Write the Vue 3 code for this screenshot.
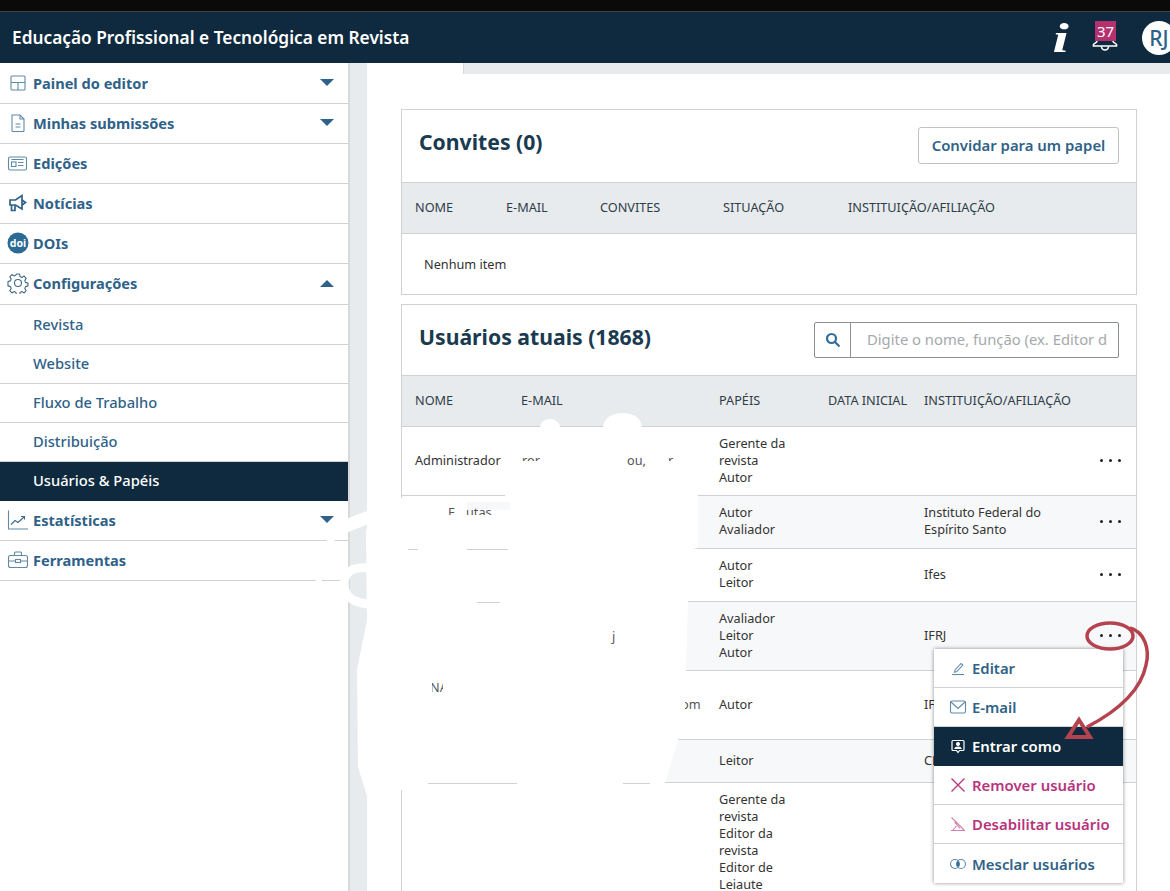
<script setup>
const nav = [
  { label: 'Painel do editor', icon: 'panel', caret: 'down' },
  { label: 'Minhas submissões', icon: 'doc', caret: 'down' },
  { label: 'Edições', icon: 'issue' },
  { label: 'Notícias', icon: 'news' },
  { label: 'DOIs', icon: 'doi' },
  { label: 'Configurações', icon: 'gear', caret: 'up' },
  { label: 'Revista', sub: true },
  { label: 'Website', sub: true },
  { label: 'Fluxo de Trabalho', sub: true },
  { label: 'Distribuição', sub: true },
  { label: 'Usuários & Papéis', sub: true, active: true },
  { label: 'Estatísticas', icon: 'stats', caret: 'down' },
  { label: 'Ferramentas', icon: 'tools' },
]
const invites = ['NOME', 'E-MAIL', 'CONVITES', 'SITUAÇÃO', 'INSTITUIÇÃO/AFILIAÇÃO']
const rows = [
  { name: 'Administrador', roles: ['Gerente da', 'revista', 'Autor'], inst: [], h: 69, dots: true },
  { name: '', roles: ['Autor', 'Avaliador'], inst: ['Instituto Federal do', 'Espírito Santo'], h: 53, dots: true },
  { name: '', roles: ['Autor', 'Leitor'], inst: ['Ifes'], h: 53, dots: true },
  { name: '', roles: ['Avaliador', 'Leitor', 'Autor'], inst: ['IFRJ'], h: 69, dots: true },
  { name: '', roles: ['Autor'], inst: ['IFF'], h: 69 },
  { name: '', roles: ['Leitor'], inst: ['CEFET'], h: 43 },
  { name: '', roles: ['Gerente da', 'revista', 'Editor da', 'revista', 'Editor de', 'Leiaute'], inst: [], h: 120 },
]
const menu = [
  { label: 'Editar', icon: 'edit' },
  { label: 'E-mail', icon: 'mail' },
  { label: 'Entrar como', icon: 'login', active: true },
  { label: 'Remover usuário', icon: 'x', danger: true },
  { label: 'Desabilitar usuário', icon: 'disable', danger: true },
  { label: 'Mesclar usuários', icon: 'merge' },
]
</script>

<template>
  <div class="page">
    <div class="blackbar"></div>
    <header class="top">
      <div class="brand">Educação Profissional e Tecnológica em Revista</div>
      <div class="tools">
        <span class="info">i</span>
        <span class="bell">
          <span class="badge">37</span>
          <svg class="bellsvg" width="26" height="12" viewBox="0 0 26 12" fill="none" stroke="#fff" stroke-width="1.600">
            <path d="M5 0c0 2-3 2-3.500 3.500V5h23V3.500C24 2 21 2 21 0" />
            <path d="M9.500 5.500a3.500 3.500 0 0 0 7 0" />
          </svg>
        </span>
        <span class="avatar">RJ</span>
      </div>
    </header>
    <div class="body">
      <nav class="side">
        <a v-for="n in nav" :key="n.label" class="item" :class="{ sub: n.sub, active: n.active }">
          <svg v-if="n.icon" class="ic" viewBox="0 0 22 22" width="22" height="22" fill="none" stroke="#5f8aa6" stroke-width="1.100">
            <template v-if="n.icon === 'panel'">
              <rect x="4" y="4" width="14" height="14" rx="1" />
              <path d="M4 10.500h14M11 10.500V18" />
            </template>
            <template v-else-if="n.icon === 'doc'">
              <path d="M5 3h8l4 4v11.500a1 1 0 0 1-1 1H6a1 1 0 0 1-1-1z" />
              <path d="M13 3v4h4M8.500 12h5M8.500 15h5" />
            </template>
            <template v-else-if="n.icon === 'issue'">
              <rect x="1.500" y="5" width="18" height="13" rx="1.500" />
              <rect x="4.500" y="10" width="4.500" height="4.500" />
              <path d="M4.500 7.500h12M11 10.500h5.500M11 13.500h5.500" />
            </template>
            <template v-else-if="n.icon === 'news'">
              <g stroke="#2f6288" stroke-width="1.700">
                <path d="M3 8h5.500L15 3.500v13.500L8.500 13H3z" />
                <path d="M4.500 13v5.500h3.500V13M15 8l3.500 2.500L15 13" />
              </g>
            </template>
            <template v-else-if="n.icon === 'doi'">
              <circle cx="11" cy="11" r="10.500" fill="#2a6a94" stroke="none" />
              <text x="11" y="14.500" text-anchor="middle" class="doit">doi</text>
            </template>
            <template v-else-if="n.icon === 'gear'">
              <circle cx="11" cy="11" r="3.500" stroke="#3f6a88" />
              <path stroke="#3f6a88" stroke-linejoin="round" d="M9.500 2h3l.6 2.600 1.700.8 2.400-1.300 2 2.200-1.400 2.300.7 1.800 2.500.7v2.800l-2.500.7-.7 1.800 1.400 2.300-2 2.200-2.400-1.300-1.700.8-.6 2.600h-3l-.6-2.600-1.700-.8-2.400 1.300-2-2.200 1.400-2.300-.7-1.800-2.500-.7V9.600l2.500-.7.7-1.800-1.400-2.300 2-2.200 2.400 1.300 1.700-.8z" />
            </template>
            <template v-else-if="n.icon === 'stats'">
              <path d="M1.500 1.500v18.500h19.500" />
              <path d="M4 15.500l4-4 3 2 6-5.500M14 7.500h3.500v3" stroke="#3f6a88" />
            </template>
            <template v-else-if="n.icon === 'tools'">
              <rect x="1.500" y="6.500" width="19" height="12" rx="2" />
              <path d="M7.500 6.500V4a1 1 0 0 1 1-1h5a1 1 0 0 1 1 1v2.500M1.500 12h7M13.500 12h7" />
              <rect x="8.500" y="10.500" width="5" height="3" />
            </template>
          </svg>
          <span class="lbl">{{ n.label }}</span>
          <span v-if="n.caret" class="caret" :class="n.caret"></span>
        </a>
      </nav>
      <div class="gutter"></div>
      <main class="main">
        <div class="tabline"><div class="tabgap"></div><div class="tabrest"></div></div>

        <section class="box first">
          <div class="boxhead">
            <h2>Convites (0)</h2>
            <button class="btn">Convidar para um papel</button>
          </div>
          <div class="thead inv">
            <span v-for="h in invites" :key="h">{{ h }}</span>
          </div>
          <div class="empty">Nenhum item</div>
        </section>

        <section class="box second">
          <div class="boxhead two">
            <h2>Usuários atuais (1868)</h2>
            <div class="search">
              <span class="sicon">
                <svg width="16" height="16" viewBox="0 0 16 16" fill="none" stroke="#2f6f9b" stroke-width="2.200">
                  <circle cx="6.500" cy="6.500" r="4.500" />
                  <path d="M10 10l4.500 4.500" />
                </svg>
              </span>
              <span class="ph">Digite o nome, função (ex. Editor d</span>
            </div>
          </div>
          <div class="thead users">
            <span>NOME</span><span>E-MAIL</span><span>PAPÉIS</span><span>DATA INICIAL</span><span>INSTITUIÇÃO/AFILIAÇÃO</span>
          </div>
          <div
            v-for="(r, i) in rows"
            :key="i"
            class="urow"
            :class="{ tint: i % 2 === 1 }"
            :style="{ height: r.h + 'px' }"
          >
            <span class="cell">{{ r.name }}</span>
            <span></span>
            <span class="cell"><span v-for="t in r.roles" :key="t" class="ln">{{ t }}</span></span>
            <span></span>
            <span class="cell"><span v-for="t in r.inst" :key="t" class="ln">{{ t }}</span></span>
            <span class="dots" :class="{ off: !r.dots }"><i></i><i></i><i></i></span>
          </div>
        </section>
      </main>
    </div>

    <div class="menu">
      <a v-for="m in menu" :key="m.label" class="mi" :class="{ active: m.active, danger: m.danger }">
        <svg class="mic" width="20" height="20" viewBox="0 0 20 20" fill="none" stroke="#5f8aa6" stroke-width="1.100">
          <template v-if="m.icon === 'edit'">
            <path d="M7 12l6-6.500 1.800 1.600-6 6.500-2.200.6z" />
            <path d="M4 16.500h12" />
          </template>
          <template v-else-if="m.icon === 'mail'">
            <rect x="2.500" y="4" width="15" height="12" rx="1.500" />
            <path d="M3 5l7 6.500L17 5" />
          </template>
          <template v-else-if="m.icon === 'login'">
            <g stroke="#fff" stroke-width="1.200">
              <path d="M5 4.500h10a1 1 0 0 1 1 1v8a1 1 0 0 1-1 1h-3.500L10 16.500 8.500 14.500H5a1 1 0 0 1-1-1v-8a1 1 0 0 1 1-1z" />
              <circle cx="10" cy="8" r="1.400" fill="#fff" />
              <path d="M7 12.500c.5-2 5.500-2 6 0z" fill="#fff" />
            </g>
          </template>
          <template v-else-if="m.icon === 'x'">
            <path d="M3.500 3.500l13 13M16.500 3.500l-13 13" stroke="#b8337c" stroke-width="1.300" />
          </template>
          <template v-else-if="m.icon === 'disable'">
            <g stroke="#d07fac">
              <path d="M3.500 3.500l13 13M3 16.500h14M5 16l3.500-4M8 7.500l-1 1 5 6" />
            </g>
          </template>
          <template v-else-if="m.icon === 'merge'">
            <circle cx="7" cy="10" r="4.500" />
            <circle cx="13" cy="10" r="4.500" />
            <path d="M10 6.800a4.500 4.500 0 0 1 0 6.400 4.500 4.500 0 0 1 0-6.400z" fill="#2f6f9b" stroke="none" />
          </template>
        </svg>
        <span>{{ m.label }}</span>
      </a>
    </div>

    <svg class="scribble" width="1170" height="891" viewBox="0 0 1170 891">
      <defs>
        <clipPath id="c1"><rect x="520" y="450" width="20" height="11" /></clipPath>
        <clipPath id="c2"><rect x="445" y="500" width="50" height="15" /></clipPath>
        <clipPath id="c3"><rect x="432" y="678" width="11" height="16" /></clipPath>
        <clipPath id="c4"><rect x="685" y="695" width="20" height="20" /></clipPath>
        <clipPath id="c5"><rect x="660" y="450" width="20" height="11" /></clipPath>
      </defs>
      <path class="wh" d="M366 530 C380 515 395 500 405 496 L505 496 L505 470 L515 440 L540 428 C540 416 560 416 560 428 L603 428 C603 408 642 408 642 428 L660 470 L698 490 L698 548 L693 549 L688 602 L686 670 L678 740 L665 783 L650 790 L517 792 L428 790 L402 790 L367 796 L358 767 L357 670 L367 620 Z" />
      <path class="band" stroke-width="13" d="M372 516 C350 524 334 530 326 540" />
      <path class="band" stroke-width="9" d="M372 568 C352 566 344 572 344 584 C344 598 356 604 372 604" />
      <path class="band" stroke-width="6" d="M319 572 L319 588" />
      <path class="patch" d="M467 502 H510 V510 H467 Z" />
      <g class="seg">
        <path d="M408 549.500H418M467 549.500H508M477 602.500H500M428 783.500H517M623 783.500H650" />
      </g>
      <g class="frag">
        <text x="522" y="465" clip-path="url(#c1)">ror</text>
        <text x="627" y="465">ou,</text>
        <text x="668" y="465" clip-path="url(#c5)">r</text>
        <text x="448" y="517" clip-path="url(#c2)">F</text>
        <text x="466" y="517" clip-path="url(#c2)">utas</text>
        <text x="612" y="641">j</text>
        <text x="430" y="692" clip-path="url(#c3)">NA</text>
        <text x="681" y="709" clip-path="url(#c4)">om</text>
      </g>
      <g fill="none" stroke="#b5434f">
        <ellipse cx="1110" cy="636" rx="23" ry="13" stroke-width="3.500" />
        <path d="M1130 628 C1145 632 1150 650 1146 665 C1140 695 1110 715 1087 727" stroke-width="3.500" />
        <path d="M1079 720 L1090 737 L1068 737 Z" stroke-width="4" />
      </g>
    </svg>
  </div>
</template>

<style>
html, body { margin: 0; padding: 0; background: #fff; overflow: hidden; }
</style>

<style scoped>
.page {
  position: relative;
  width: 1170px;
  height: 891px;
  overflow: hidden;
  font-family: "Noto Sans", "Open Sans", sans-serif;
  font-size: 13px;
  color: #333;
  background: #fff;
}
.blackbar { height: 11px; background: #0a0a0a; border-bottom: 1px solid #444; }
.top {
  height: 51px;
  background: #0f2a3e;
  display: flex;
  align-items: center;
  justify-content: space-between;
  padding-left: 12px;
  color: #fff;
}
.brand { font-size: 17.300px; font-weight: 600; }
.tools { display: flex; align-items: center; }
.info {
  display: block;
  font-family: "Liberation Serif", serif;
  font-style: italic;
  font-weight: 700;
  font-size: 42px;
  line-height: 40px;
  width: 40px;
  padding-left: 2px;
  box-sizing: border-box;
  transform: scaleX(1.4);
  transform-origin: 6px 50%;
}
.bell { position: relative; width: 26px; height: 34px; margin-right: 24px; }
.badge {
  position: absolute;
  left: 3px;
  top: 0;
  width: 21px;
  height: 20px;
  background: #b5306f;
  font-size: 15px;
  line-height: 20px;
  text-align: center;
}
.bellsvg { position: absolute; left: 0; top: 20px; }
.avatar {
  width: 34px;
  height: 34px;
  margin-right: -6px;
  border-radius: 50%;
  background: #fff;
  color: #2f6288;
  font-size: 21px;
  font-weight: 500;
  line-height: 34px;
  text-align: center;
}
.body { display: flex; height: 828px; }
.side { width: 348px; flex: none; padding-top: 1px; border-right: 2px solid #d6d8da; box-sizing: content-box; }
.gutter { width: 17px; flex: none; background: #e8ebed; }
.item {
  display: flex;
  align-items: center;
  height: 40px;
  border-bottom: 1px solid #cfd1d3;
  padding: 0 0 2px 7px;
  color: #2f6288;
  font-weight: 700;
  font-size: 14.600px;
  box-sizing: border-box;
}
.item:nth-child(6) { height: 41px; }
.ic { flex: none; margin-right: 4px; }
.doit { fill: #fff; stroke: none; font-size: 10.500px; font-weight: 700; }
.item.sub { padding-left: 33px; font-weight: 500; font-size: 14.700px; height: 39px; }
.item.sub:nth-child(7) { height: 40px; }
.item.sub.active { background: #0f2a3e; color: #fff; border-bottom-color: #0f2a3e; }
.lbl { flex: 1; }
.caret {
  width: 0;
  height: 0;
  margin-right: 14px;
  border-left: 7px solid transparent;
  border-right: 7px solid transparent;
}
.caret.down { border-top: 7px solid #2f6288; }
.caret.up { border-bottom: 7px solid #2f6288; }
.main { flex: 1; min-width: 0; }
.tabline { display: flex; height: 11px; }
.tabgap { width: 96px; border-right: 1px solid #d6d8da; }
.tabrest { flex: 1; background: #e8ebed; }
.box {
  margin-left: 34px;
  width: 734px;
  border: 1px solid #cfd1d3;
  box-sizing: content-box;
}
.first { margin-top: 35px; }
.second { margin-top: 9px; }
.boxhead {
  height: 72px;
  display: flex;
  align-items: center;
  justify-content: space-between;
  padding: 0 17px;
  box-sizing: border-box;
}
h2 { margin: 0 0 10px; font-size: 21.200px; font-weight: 700; color: #1a3a50; }
.boxhead.two { height: 70px; }
.boxhead.two h2 { margin-bottom: 8px; }
.btn {
  width: 201px;
  height: 37px;
  margin-bottom: 1px;
  background: #fff;
  border: 1px solid #bfc3c6;
  border-radius: 3px;
  color: #2f6288;
  font-family: inherit;
  font-size: 14.900px;
  font-weight: 600;
  padding: 0 0 2px;
}
.thead {
  height: 52px;
  background: #e8ebed;
  border-top: 1px solid #cfd1d3;
  border-bottom: 1px solid #cfd1d3;
  box-sizing: border-box;
  color: #2d3d48;
  font-size: 12.700px;
  align-items: center;
  padding: 0 0 2px 13px;
}
.inv { display: grid; grid-template-columns: 91px 94px 123px 125px 1fr; }
.users { display: grid; grid-template-columns: 106px 198px 109px 96px 1fr; }
.empty { height: 60px; padding-left: 22px; line-height: 60px; font-size: 12.700px; }
.search {
  display: flex;
  width: 305px;
  height: 36px;
  border: 1px solid #8a8f93;
  border-radius: 2px;
  box-sizing: border-box;
}
.sicon {
  width: 35px;
  border-right: 1px solid #8a8f93;
  display: flex;
  align-items: center;
  justify-content: center;
}
.ph { padding-left: 16px; line-height: 33px; color: #a5a9ac; font-size: 14.800px; white-space: nowrap; overflow: hidden; }
.urow {
  display: grid;
  grid-template-columns: 106px 198px 109px 96px 1fr 40px;
  align-items: center;
  padding: 0 0 2px 13px;
  border-bottom: 1px solid #cfd1d3;
  box-sizing: border-box;
  font-size: 12.700px;
  line-height: 17px;
  color: #333;
}
.urow.tint { background: #f7f8f9; }
.ln { display: block; }
.dots { display: flex; gap: 6px; justify-content: center; margin-right: 12px; }
.dots.off { visibility: hidden; }
.dots i { width: 3px; height: 3px; border-radius: 50%; background: #222; }
.menu {
  position: absolute;
  left: 934px;
  top: 649px;
  width: 189px;
  background: #fff;
  box-shadow: 0 0 4px rgba(0, 0, 0, 0.45);
}
.mi {
  display: flex;
  align-items: center;
  height: 39px;
  padding-left: 14px;
  border-bottom: 1px solid #cfd1d3;
  color: #2f6288;
  font-size: 14.900px;
  font-weight: 600;
  box-sizing: border-box;
}
.mi:last-child { border-bottom: 0; }
.mi.active { background: #0f2a3e; color: #fff; border-bottom-color: #0f2a3e; }
.mi.danger { color: #b8337c; }
.mic { margin-right: 4px; flex: none; }
.scribble { position: absolute; left: 0; top: 0; pointer-events: none; }
.wh { fill: #fff; }
.band { stroke: #fff; fill: none; }
.patch { fill: #f7f8f9; }
.seg path { stroke: #cfd1d3; stroke-width: 1; fill: none; }
.frag text { font-size: 12.700px; fill: #555; }
</style>
